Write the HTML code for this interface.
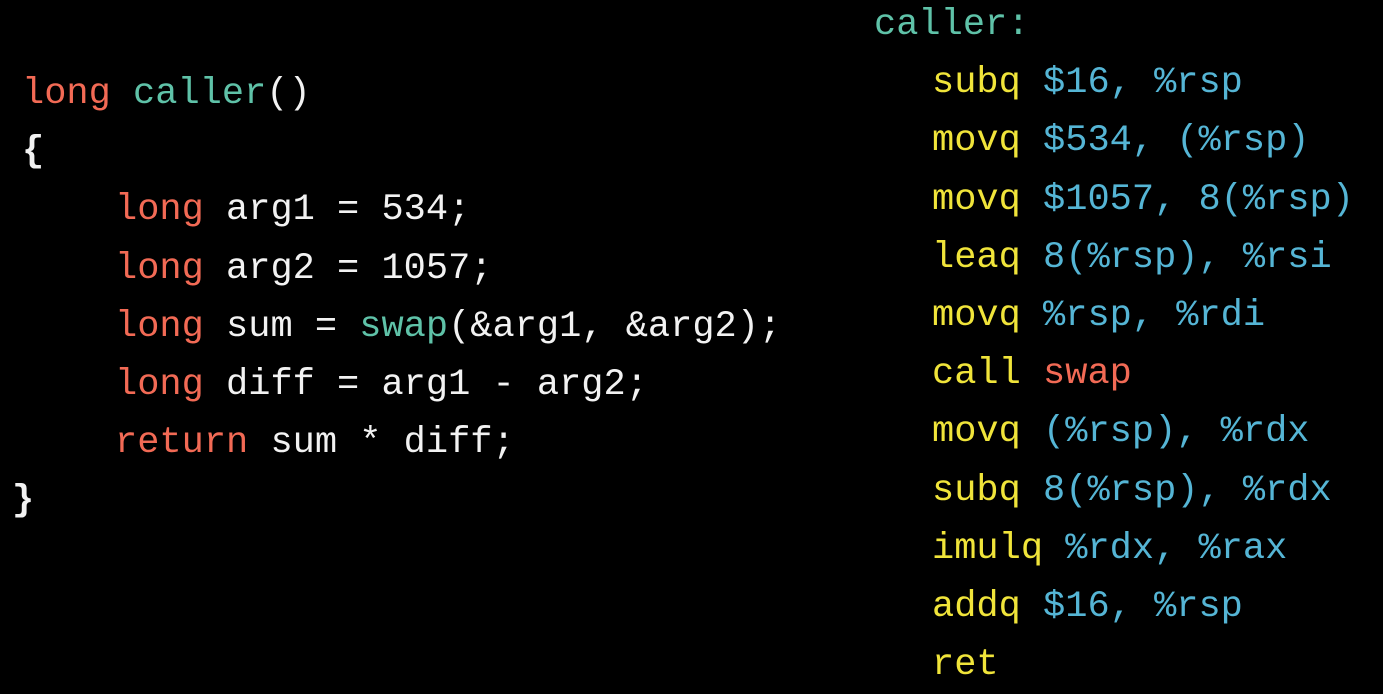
<!DOCTYPE html>
<html><head><meta charset="utf-8"><style>
html,body{margin:0;padding:0;background:#000;width:1383px;height:686px;overflow:hidden}
.c{position:absolute;font-family:"Liberation Mono",monospace;font-size:37px;line-height:58.2px;color:#f2f2f2}
.c div{white-space:pre;height:58.2px}
.r{color:#f26a55}.t{color:#5fc2a8}.y{color:#f0e43a}.b{color:#55b5d5}
</style></head><body>
<div class="c" style="left:22px;top:65px">
<div><span class="r">long</span> <span class="t">caller</span>()</div>
<div style="font-weight:bold">{</div>
<div style="padding-left:93px"><span class="r">long</span> arg1 = 534;</div>
<div style="padding-left:93px"><span class="r">long</span> arg2 = 1057;</div>
<div style="padding-left:93px"><span class="r">long</span> sum = <span class="t">swap</span>(&amp;arg1, &amp;arg2);</div>
<div style="padding-left:93px"><span class="r">long</span> diff = arg1 - arg2;</div>
<div style="padding-left:93px"><span class="r">return</span> sum * diff;</div>
<div style="font-weight:bold;margin-left:-10px">}</div>
</div>
<div class="c" style="left:874px;top:-4px">
<div class="t">caller:</div>
<div style="padding-left:58px"><span class="y">subq</span> <span class="b">$16, %rsp</span></div>
<div style="padding-left:58px"><span class="y">movq</span> <span class="b">$534, (%rsp)</span></div>
<div style="padding-left:58px"><span class="y">movq</span> <span class="b">$1057, 8(%rsp)</span></div>
<div style="padding-left:58px"><span class="y">leaq</span> <span class="b">8(%rsp), %rsi</span></div>
<div style="padding-left:58px"><span class="y">movq</span> <span class="b">%rsp, %rdi</span></div>
<div style="padding-left:58px"><span class="y">call</span> <span class="r">swap</span></div>
<div style="padding-left:58px"><span class="y">movq</span> <span class="b">(%rsp), %rdx</span></div>
<div style="padding-left:58px"><span class="y">subq</span> <span class="b">8(%rsp), %rdx</span></div>
<div style="padding-left:58px"><span class="y">imulq</span> <span class="b">%rdx, %rax</span></div>
<div style="padding-left:58px"><span class="y">addq</span> <span class="b">$16, %rsp</span></div>
<div style="padding-left:58px"><span class="y">ret</span></div>
</div>
</body></html>
